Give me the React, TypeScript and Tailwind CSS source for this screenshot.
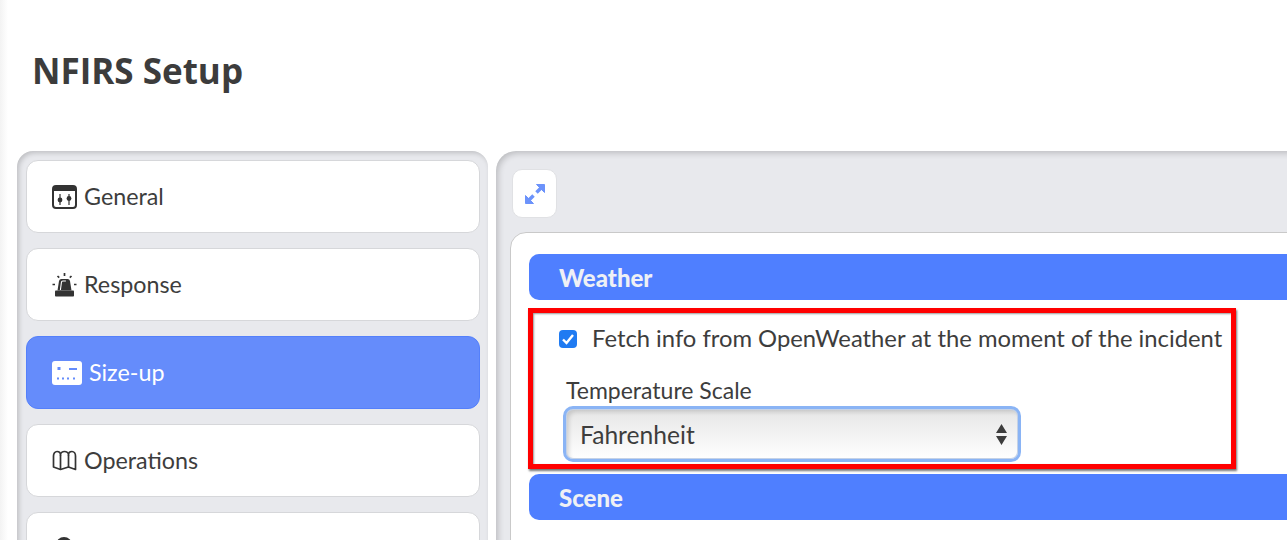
function GeneralIcon() {
  return (
    <svg width="25" height="24" viewBox="0 0 25 24" className="shrink-0">
      <rect x="1" y="1" width="23" height="22" rx="3" fill="none" stroke="#333" strokeWidth="2" />
      <path d="M1 4a3 3 0 0 1 3-3h17a3 3 0 0 1 3 3v2H1z" fill="#333" />
      <path d="M8 9v11M17 9v11" stroke="#333" strokeWidth="1.2" />
      <circle cx="8" cy="15" r="2.4" fill="#333" />
      <circle cx="17" cy="13.500" r="2.4" fill="#333" />
    </svg>
  );
}

function ResponseIcon() {
  return (
    <svg width="25" height="24" viewBox="0 0 25 24" className="shrink-0">
      <path d="M5.500 17.500 7 8A2.500 2.500 0 0 1 9.500 6h6A2.500 2.500 0 0 1 18 8L19.500 17.500z" fill="#333" />
      <path d="M8.400 17 9.400 9.500a1.500 1.500 0 0 1 1.500-1.500h3" fill="none" stroke="#fff" strokeWidth="1.100" />
      <rect x="3" y="17.500" width="19" height="6" rx="0.800" fill="#333" />
      <path d="M12.500 0v3M5.500 3l1.700 1.700M19.500 3l-1.700 1.700M.5 11.500h2.500M22 11.500h2.500" stroke="#333" strokeWidth="1.700" />
    </svg>
  );
}

function SizeUpIcon() {
  return (
    <svg width="30" height="24" viewBox="0 0 30 24" className="shrink-0">
      <rect width="30" height="24" rx="3" fill="#fff" />
      <g fill="#658cfb">
        <rect x="5.500" y="6" width="3" height="3" />
        <rect x="17" y="7" width="8" height="2" />
        <rect x="5" y="16.500" width="2" height="2" />
        <rect x="10" y="16.500" width="2" height="2" />
        <rect x="15" y="16.500" width="2" height="2" />
        <rect x="21" y="16.500" width="2" height="2" />
      </g>
    </svg>
  );
}

function OperationsIcon() {
  return (
    <svg width="25" height="21" viewBox="0 0 25 21" fill="none" stroke="#333" strokeWidth="1.700" strokeLinejoin="round" className="shrink-0">
      <path d="M1.500 6C1.500 3.500 3 1.500 5 1.500S8.500 3 8.500 5C8.500 3 10.500 1.500 12.500 1.500S16.500 3 16.500 5C16.500 3 18 1.500 20 1.500S23.500 3.500 23.500 6V19.500L16.500 17 8.500 19.500 1.500 17z" />
      <path d="M8.500 5V19.500M16.500 5V17" />
    </svg>
  );
}

function ExpandIcon() {
  return (
    <svg width="20" height="20" viewBox="0 0 20 20" fill="#6c93fb" stroke="#6c93fb" strokeLinejoin="round">
      <path d="M11.500.5H19.500V8.500z" />
      <path d="M.5 11.500V19.500H8.500z" />
      <path d="M16 4 11.500 8.500M4 16 8.500 11.500" strokeWidth="3.500" />
    </svg>
  );
}

function SideItem({ icon, label, active }: { icon?: React.ReactNode; label: string; active?: boolean }) {
  return (
    <div
      className={
        active
          ? "flex h-[73px] shrink-0 items-center gap-[7px] rounded-xl border border-[#5480fb] bg-[#658cfb] pl-[25px] text-white"
          : "flex h-[73px] shrink-0 items-center gap-[7px] rounded-xl border border-[#d6d7da] bg-white pl-[25px] text-[#3d3d3d]"
      }
    >
      {icon}
      <span className="text-[23.3px] leading-none">{label}</span>
    </div>
  );
}

function SectionBar({ title }: { title: string }) {
  return (
    <div className="flex h-[46px] items-center rounded-l-[10px] bg-[#4f7fff] pt-[1px] pl-[30px] text-[24px] font-black text-[#eef0f5]">
      {title}
    </div>
  );
}

export default function App() {
  return (
    <div className="relative h-[540px] w-[1287px] overflow-hidden bg-white font-['Lato','Liberation_Sans',sans-serif]">
      <div className="absolute inset-y-0 left-0 w-2 bg-gradient-to-r from-[#f3f3f3] to-white" />

      <h1 className="relative pt-[48px] pl-[32px] font-['Open_Sans','Lato',sans-serif] text-[35px] leading-[46px] font-bold text-[#3c3c3c]">
        NFIRS Setup
      </h1>

      <div className="relative mt-[57px] flex gap-2 pl-[17px]">
        {/* left nav */}
        <div className="flex h-[420px] w-[471px] shrink-0 flex-col gap-[15px] rounded-[16px] bg-[#e8e9ed] pt-[9px] pr-2 pl-[9px] shadow-[inset_2px_2px_5px_rgba(0,0,0,0.18)]">
          <SideItem icon={<GeneralIcon />} label="General" />
          <SideItem icon={<ResponseIcon />} label="Response" />
          <SideItem icon={<SizeUpIcon />} label="Size-up" active />
          <SideItem icon={<OperationsIcon />} label="Operations" />
          <div className="h-[73px] shrink-0 rounded-xl border border-[#d6d7da] bg-white pt-[24px] pl-[29px]">
            <div className="h-4 w-4 rounded-full bg-[#333]" />
          </div>
        </div>

        {/* main panel */}
        <div className="h-[420px] w-[820px] shrink-0 rounded-tl-[20px] bg-[#e8e9ed] pt-[18px] pl-[14px] shadow-[inset_2px_2px_6px_rgba(0,0,0,0.2)]">
          <div className="ml-[2px] flex h-[49px] w-[45px] items-center justify-center rounded-[10px] border border-[#e0e1e4] bg-white">
            <ExpandIcon />
          </div>

          <div className="mt-[14px] h-[400px] rounded-tl-[16px] border border-[#c9c9c9] bg-white pt-[21px] pl-[18px]">
            <SectionBar title="Weather" />

            <div className="h-[174px] pt-[27px] pl-[30px] text-[#3d3d3d]">
              <label className="flex h-[24px] items-center gap-[15px]">
                <span className="relative h-[18px] w-[18px] shrink-0">
                  <input type="checkbox" defaultChecked readOnly className="block h-[18px] w-[18px] appearance-none rounded-[4px] bg-[#1f7bf2]" />
                  <svg viewBox="0 0 18 18" className="absolute inset-0" fill="none" stroke="#fff" strokeWidth="2.4">
                    <path d="M4 9.500 7.500 13 14 5" />
                  </svg>
                </span>
                <span className="text-[23.8px] leading-none">Fetch info from OpenWeather at the moment of the incident</span>
              </label>
              <div className="mt-[26px] pl-[7px] text-[23px] leading-[26px]">Temperature Scale</div>
              <div className="relative mt-[3px] ml-[4px] flex h-[56px] w-[458px] items-center rounded-[10px] border-[3px] border-[#8ab4f5] bg-gradient-to-b from-[#e6e6e6] to-white pt-[3px] pl-[14px] text-[24.6px] shadow-[inset_0_0_0_1px_#c5d2e6,inset_3px_3px_4px_rgba(0,0,0,0.14)]">
                Fahrenheit
                <svg width="11" height="21" viewBox="0 0 11 21" className="absolute top-[15px] right-[11px]" fill="#3d3d3d">
                  <path d="M5.500 0 11 9H0zM0 12h11L5.500 21z" />
                </svg>
              </div>
            </div>

            <SectionBar title="Scene" />
          </div>
        </div>
      </div>

      {/* red annotation box */}
      <div className="absolute top-[308px] left-[528px] h-[161px] w-[708px] border-[5px] border-[#ff0000] shadow-[1px_2px_2px_rgba(0,0,0,0.55),inset_1px_1px_2px_rgba(0,0,0,0.4)]" />
    </div>
  );
}
